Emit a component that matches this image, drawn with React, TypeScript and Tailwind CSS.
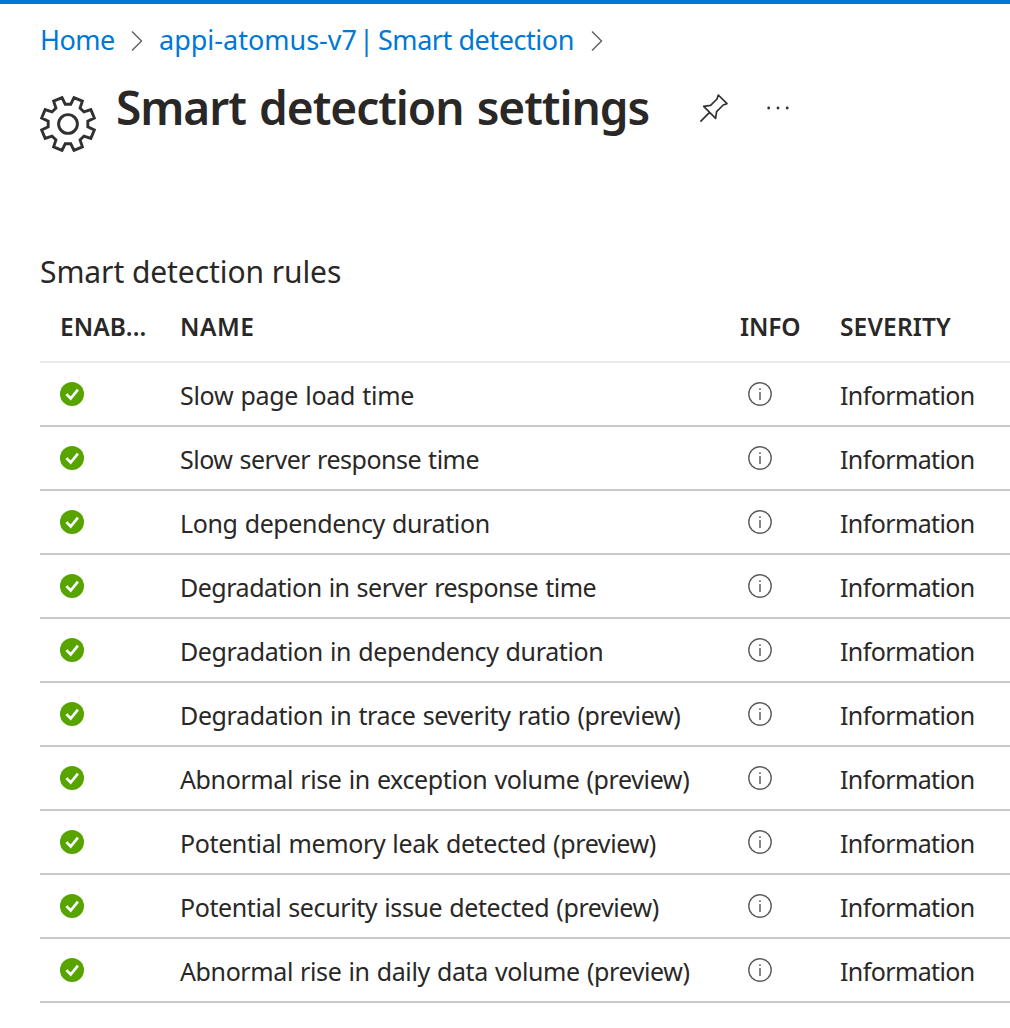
const rules = [
  { name: 'Slow page load time', tracking: 'tracking-[-0.3px]' },
  { name: 'Slow server response time', tracking: 'tracking-[-0.49px]' },
  { name: 'Long dependency duration', tracking: 'tracking-[-0.38px]' },
  { name: 'Degradation in server response time', tracking: 'tracking-[-0.49px]' },
  { name: 'Degradation in dependency duration', tracking: 'tracking-[-0.38px]' },
  { name: 'Degradation in trace severity ratio (preview)', tracking: 'tracking-[-0.37px]' },
  { name: 'Abnormal rise in exception volume (preview)', tracking: 'tracking-[-0.38px]' },
  { name: 'Potential memory leak detected (preview)', tracking: 'tracking-[-0.38px]' },
  { name: 'Potential security issue detected (preview)', tracking: 'tracking-[-0.4px]' },
  { name: 'Abnormal rise in daily data volume (preview)', tracking: 'tracking-[-0.39px]' },
];

// Outline of an eight-toothed gear centred on the origin.
const gearPoints = Array.from({ length: 8 }, (_, i) => {
  const at = (r: number, deg: number) => {
    const a = ((deg + i * 45) * Math.PI) / 180;
    return `${(r * Math.sin(a)).toFixed(2)},${(-r * Math.cos(a)).toFixed(2)}`;
  };
  return [at(20, -8), at(20, 8), at(27, 12.8), at(27, 32.2)].join(' ');
}).join(' ');

function Gear() {
  return (
    <svg className="mt-[17px] h-[58px] w-[58px] shrink-0" viewBox="-29 -29 58 58" fill="none" stroke="#323130" strokeWidth="2.9">
      <polygon points={gearPoints} />
      <circle r="9.4" />
    </svg>
  );
}

function Pin() {
  return (
    <svg className="h-8 w-8" viewBox="0 0 32 32" fill="none" stroke="#323130" strokeWidth="1.7" strokeLinejoin="round">
      <path d="M2.4 29.6 11.3 20.7M20.3 3 29 11.7 25.2 13 18.6 19.6 17.6 26.3 5.7 14.4 12.6 13.4 19 7Z" />
    </svg>
  );
}

function Chevron() {
  return (
    <svg className="h-6 w-3 shrink-0" viewBox="0 0 12 24" fill="none" stroke="#605e5c" strokeWidth="1.4">
      <path d="M1 2.5 10.5 12 1 21.5" />
    </svg>
  );
}

function Check() {
  return (
    <svg className="h-6 w-6" viewBox="0 0 24 24" fill="none">
      <circle cx="12" cy="12" r="12" fill="#57a300" />
      <path d="M6.4 12.1 10.7 16.5 17.9 7.6" stroke="#fff" strokeWidth="2.7" />
    </svg>
  );
}

function Info() {
  return (
    <svg className="h-6 w-6" viewBox="0 0 24 24" fill="none" stroke="#605e5c">
      <circle cx="12" cy="12" r="11.2" strokeWidth="1.4" />
      <path d="M12 10V18M12 6.2V8" strokeWidth="1.5" />
    </svg>
  );
}

export default function App() {
  return (
    <div className="h-[1028px] w-[1010px] overflow-hidden border-t-4 border-[#0078d4] bg-white pl-10 font-['Noto_Sans',sans-serif] text-[25px] leading-8 whitespace-nowrap text-[#292827]">
      <nav className="flex h-[74px] items-center text-[27px] text-[#0078d4]">
        <a className="w-[91px] pb-0.5 tracking-[-0.5px]">Home</a>
        <Chevron />
        <a className="ml-4 flex w-[432px] pb-0.5">
          <span className="w-[200px]">appi-atomus-v7</span>
          <span className="w-[19px]">|</span>
          <span className="tracking-[-0.45px]">Smart detection</span>
        </a>
        <Chevron />
      </nav>
      <header className="-ml-px flex h-[172px] items-start">
        <Gear />
        <h1 className="-mt-px ml-[19px] w-[582px] text-[46px] leading-[60px] font-semibold tracking-[-1.05px] [word-spacing:2.4px]">
          Smart detection settings
        </h1>
        <div className="mt-[14px]">
          <Pin />
        </div>
        <svg className="mt-[26px] ml-9 h-2 w-6" viewBox="0 0 24 8" fill="#323130">
          <circle cx="2.7" cy="4" r="1.4" />
          <circle cx="12" cy="4" r="1.4" />
          <circle cx="21.2" cy="4" r="1.4" />
        </svg>
      </header>
      <h2 className="h-[44px] text-[30px] leading-[44px] tracking-[-0.08px]">Smart detection rules</h2>
      <div className="grid h-[69px] grid-cols-[140px_560px_100px_170px] items-center border-b-2 border-[#eaeaea] pb-0.5 text-[24.5px] font-semibold">
        <span className="pl-5 tracking-[0.1px]">ENAB...</span>
        <span className="tracking-[0.5px]">NAME</span>
        <span className="tracking-[-0.1px]">INFO</span>
        <span className="tracking-[0.15px]">SEVERITY</span>
      </div>
      {rules.map((rule) => (
        <div key={rule.name} className="grid h-16 grid-cols-[140px_560px_100px_170px] items-center border-b-2 border-[#c8c8c8]">
          <span className="pl-5">
            <Check />
          </span>
          <span className="pt-0.5 [word-spacing:1px]">
            <span className={rule.tracking}>{rule.name}</span>
          </span>
          <span className="pl-2">
            <Info />
          </span>
          <span className="pt-0.5 tracking-[-0.62px]">Information</span>
        </div>
      ))}
    </div>
  );
}
